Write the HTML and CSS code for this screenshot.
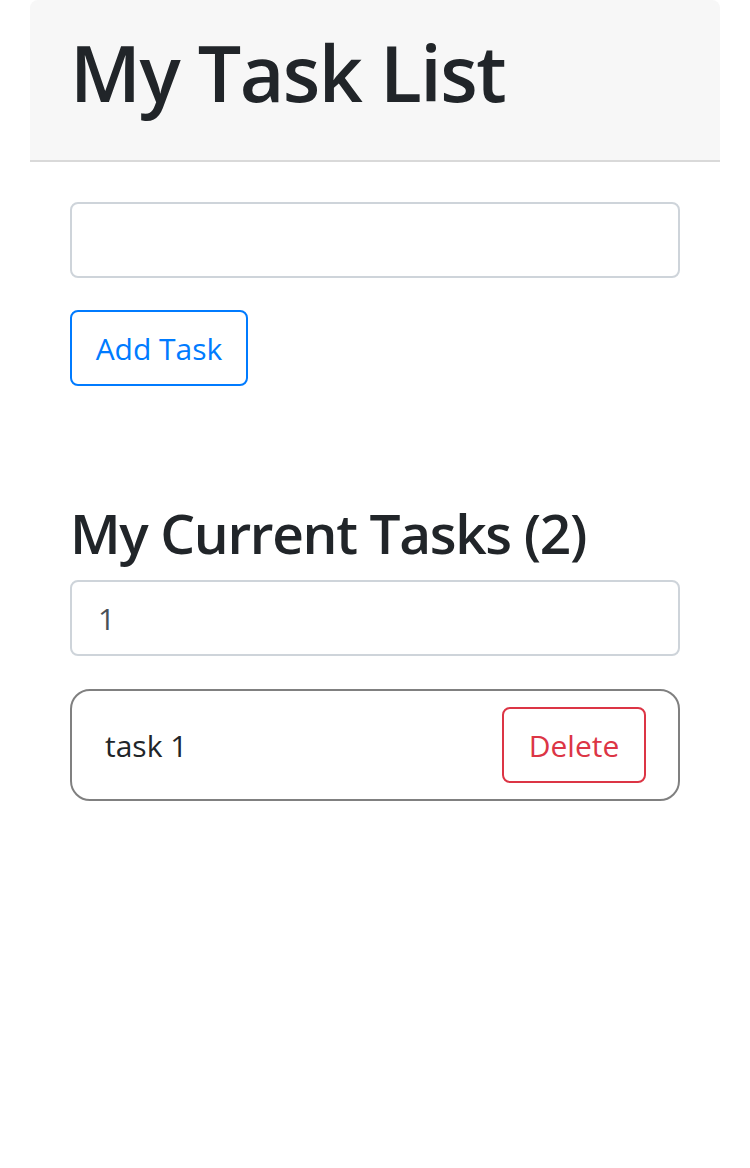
FILE: index.html
```html
<!DOCTYPE html>
<html>
<head>
<meta charset="utf-8">
<link rel="stylesheet" href="styles.css">
</head>
<body>
<div class="page">
  <header class="jumbo">
    <h1 class="title">My Task List</h1>
  </header>
  <main class="content">
    <input class="field" type="text" value="">
    <button class="btn btn-blue">Add Task</button>
    <h2 class="subtitle">My Current Tasks (2)</h2>
    <input class="field field-filter" type="text" value="1">
    <div class="task">
      <span class="task-name">task 1</span>
      <button class="btn btn-red">Delete</button>
    </div>
  </main>
</div>
</body>
</html>
```
FILE: styles.css
```css
* { box-sizing: border-box; }
html, body { margin: 0; padding: 0; background: #fff; }
body {
  font-family: "Open Sans", "Noto Sans", sans-serif;
  color: #212529;
  width: 750px;
  height: 1168px;
}
.page { padding: 0 30px; }
.jumbo {
  background: #f7f7f7;
  border-bottom: 2px solid #d9d9d9;
  border-radius: 8px 8px 0 0;
  height: 162px;
  padding: 0 40px;
  display: flex;
  align-items: flex-start;
}
.title {
  margin: 27px 0 0 0;
  font-size: 77px;
  font-weight: 600;
  line-height: 1.2;
  letter-spacing: -1.5px;
  white-space: nowrap;
}
.content {
  padding: 40px 40px 0;
  display: flex;
  flex-direction: column;
  align-items: flex-start;
}
.field {
  width: 610px;
  height: 76px;
  border: 2px solid #ced4da;
  border-radius: 8px;
  font-family: inherit;
  font-size: 30px;
  color: #495057;
  padding: 0 26px;
  outline: none;
}
.btn {
  background: #fff;
  font-family: inherit;
  font-size: 30px;
  height: 76px;
  border-radius: 8px;
  padding: 0;
  white-space: nowrap;
  cursor: pointer;
}
.btn-blue {
  margin-top: 32px;
  border: 2px solid #007bff;
  color: #007bff;
  width: 178px;
}
.subtitle {
  margin: 114px 0 0 0;
  font-size: 55px;
  font-weight: 600;
  line-height: 1.2;
  letter-spacing: -1.35px;
  white-space: nowrap;
}
.field-filter { margin-top: 14px; }
.task {
  margin-top: 33px;
  width: 610px;
  height: 112px;
  border: 2px solid #808080;
  border-radius: 20px;
  display: flex;
  align-items: center;
  justify-content: space-between;
  padding: 0 32px 0 33px;
}
.task-name { font-size: 30px; }
.btn-red {
  border: 2px solid #dc3545;
  color: #dc3545;
  width: 144px;
}
```
